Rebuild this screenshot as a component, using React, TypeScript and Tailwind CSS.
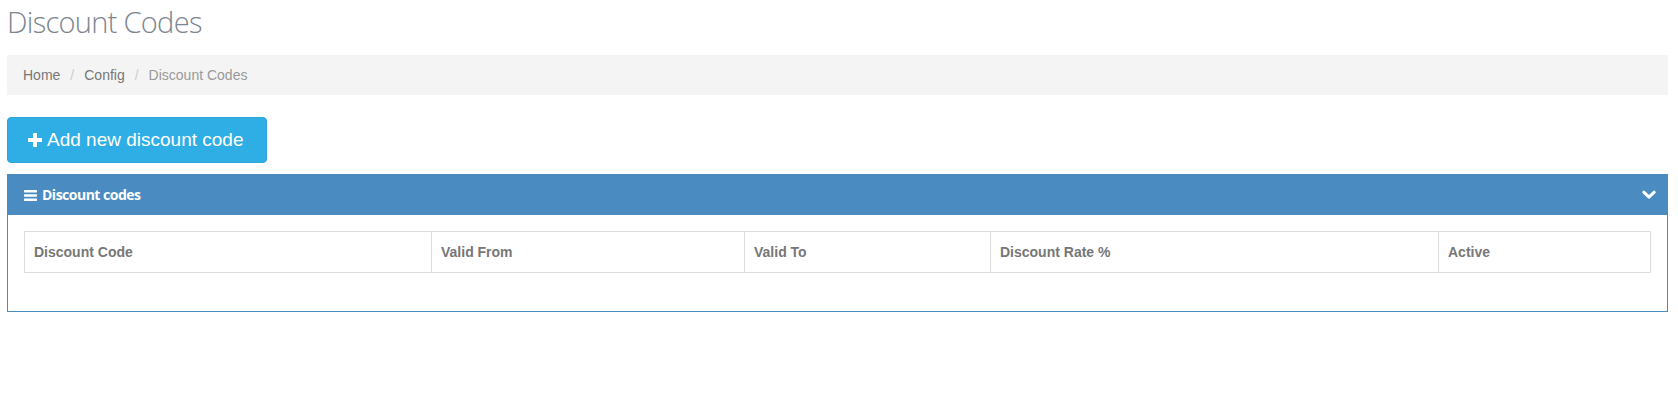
import React from "react";

const columns = [
  { label: "Discount Code", width: "w-[407px]" },
  { label: "Valid From", width: "w-[313px]" },
  { label: "Valid To", width: "w-[246px]" },
  { label: "Discount Rate %", width: "w-[448px]" },
  { label: "Active", width: "" },
];

function PlusIcon() {
  return (
    <svg width="14" height="14" viewBox="0 0 14 14" className="shrink-0">
      <path d="M5 0h4v5h5v4H9v5H5V9H0V5h5z" fill="#fff" />
    </svg>
  );
}

function BarsIcon() {
  return (
    <svg width="13" height="11" viewBox="0 0 13 11" className="shrink-0">
      <rect x="0" y="0" width="13" height="2.4" rx="0.6" fill="#fff" />
      <rect x="0" y="4.3" width="13" height="2.4" rx="0.6" fill="#fff" />
      <rect x="0" y="8.6" width="13" height="2.4" rx="0.6" fill="#fff" />
    </svg>
  );
}

function ChevronDown() {
  return (
    <svg width="14" height="10" viewBox="0 0 14 10" className="shrink-0">
      <path
        d="M1.8 2.2 7 7.2l5.2-5"
        fill="none"
        stroke="#fff"
        strokeWidth="3"
        strokeLinecap="round"
        strokeLinejoin="round"
      />
    </svg>
  );
}

export default function App() {
  return (
    <div className="min-h-[415px] bg-white px-[7px] pr-[10px] font-['Liberation_Sans',Arial,sans-serif]">
      <h1 className="pt-[2px] mb-[13px] font-['Open_Sans',sans-serif] font-light text-[29px] leading-[40px] text-[#7d8590] tracking-[-0.7px]">
        Discount Codes
      </h1>

      <nav className="flex items-center h-[40px] bg-[#f4f4f4] pl-[16px] text-[14px] leading-[20px]">
        <span className="text-[#777]">Home</span>
        <span className="mx-[10px] text-[#ccc]">/</span>
        <span className="text-[#777]">Config</span>
        <span className="mx-[10px] text-[#ccc]">/</span>
        <span className="text-[#999]">Discount Codes</span>
      </nav>

      <div className="mt-[22px]">
        <button className="flex items-center h-[46px] w-[260px] px-[20px] rounded-[4px] border border-[#2ba6dc] bg-[#2faee6] text-white text-[19px] leading-[24px]">
          <PlusIcon />
          <span className="ml-[5px]">Add new discount code</span>
        </button>
      </div>

      <section className="mt-[11px] border border-[#4a8bc2]">
        <header className="flex items-center justify-between h-[40px] bg-[#4a8bc2] pl-[16px] pr-[11px] text-white">
          <div className="flex items-center">
            <BarsIcon />
            <span className="ml-[5px] font-['Open_Sans',sans-serif] font-bold text-[14px] tracking-[-0.5px] leading-[20px]">
              Discount codes
            </span>
          </div>
          <ChevronDown />
        </header>
        <div className="pt-[16px] px-[16px] pb-[38px]">
          <table className="w-full border-collapse text-[14px] leading-[18px]">
            <thead>
              <tr className="h-[41px]">
                {columns.map((c) => (
                  <th
                    key={c.label}
                    className={`${c.width} border border-[#dddddd] px-[9px] text-left font-bold text-[#777]`}
                  >
                    {c.label}
                  </th>
                ))}
              </tr>
            </thead>
          </table>
        </div>
      </section>
    </div>
  );
}
